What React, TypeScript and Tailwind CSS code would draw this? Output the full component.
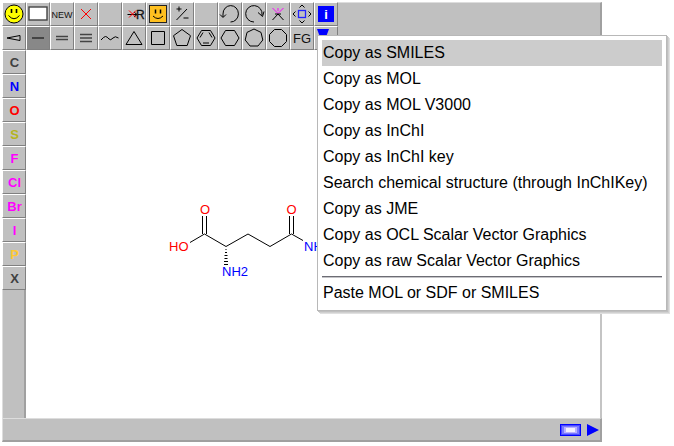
import type { ReactNode } from "react";

type Tool = { name: string; icon?: ReactNode; selected?: boolean };

const line = { fill: "none", stroke: "#000", strokeWidth: 1 };
const label = { fontFamily: '"Liberation Sans", Arial, sans-serif', fill: "#111" };

const topTools: Tool[] = [
  {
    name: "SMILES",
    icon: (
      <>
        <circle cx="12" cy="12" r="9" fill="#ff0" stroke="#000" />
        <path d="M9.5 7v4M14.5 7v4" stroke="#000" strokeWidth="1.6" />
        <path d="M6.5 13.5Q12 20 17.5 13.5" {...line} />
      </>
    ),
  },
  { name: "Clear", icon: <rect x="3" y="5" width="18" height="13" fill="#fff" stroke="#444" strokeWidth="1.4" /> },
  { name: "New", icon: <text x="12" y="16" fontSize="9" textAnchor="middle" {...label}>NEW</text> },
  { name: "Delete", icon: <path d="M7 7l10 10M17 7L7 17" stroke="#f00" /> },
  { name: "Unused" },
  {
    name: "Delete R",
    icon: (
      <>
        <path d="M5.500 12.500h9M12 10l3 2.500-3 2.500" {...line} />
        <path d="M7 8.500l7 7M14 8.500l-7 7" stroke="#f00" />
        <text x="14" y="17" fontSize="12" {...label} stroke="#111" strokeWidth="0.3">R</text>
      </>
    ),
  },
  {
    name: "Template",
    icon: (
      <>
        <rect x="3.500" y="3.500" width="17" height="17" fill="#ffc020" stroke="#222" />
        <path d="M9.500 7.500v4M14.500 7.500v4" stroke="#000" strokeWidth="1.5" />
        <path d="M7 14Q12 19 17 14" {...line} />
      </>
    ),
  },
  { name: "Charge", icon: <path d="M6.500 7h5M9 4.500v5M6.500 18L17 7M13.500 16h5" {...line} /> },
  { name: "Unused slot" },
  { name: "Undo", icon: <path d="M5 15V12A7.700 8.200 0 1 1 12.500 20M2 12.500l3 3 3-3" {...line} /> },
  { name: "Redo", icon: <path d="M12 20A8.200 8.200 0 1 1 20 13M16 10.500l4.500 4 1.500-5" {...line} /> },
  {
    name: "Spin",
    icon: (
      <>
        <path d="M6.500 6L12 11.500 17.500 6M12 6v3" fill="none" stroke="#f0f" />
        <path d="M6.500 18L12 12l5.500 6M9 12h6" {...line} />
      </>
    ),
  },
  {
    name: "Move",
    icon: (
      <>
        <rect x="8.500" y="8.500" width="7" height="7" fill="none" stroke="#22f" strokeWidth="1.3" />
        <path d="M9.500 5.500l2.500-2.500 2.500 2.500M9.500 18.500l2.500 2.500 2.500-2.500M5.500 9.500l-2.500 2.500 2.500 2.500M18.500 9.500l2.500 2.500-2.500 2.500" {...line} />
      </>
    ),
  },
  {
    name: "Information",
    icon: (
      <>
        <rect x="4" y="4" width="16" height="16" fill="#00f" />
        <text x="12" y="17" fontSize="13" fontWeight="700" textAnchor="middle" {...label} fill="#fff">i</text>
      </>
    ),
  },
];

const bondTools: Tool[] = [
  { name: "Stereo bond", icon: <path d="M5 12l13-2.500v5z" {...line} /> },
  { name: "Single bond", selected: true, icon: <path d="M6 12h12" {...line} /> },
  { name: "Double bond", icon: <path d="M6 10.500h12M6 13.500h12" stroke="#444" strokeWidth="1.4" /> },
  { name: "Triple bond", icon: <path d="M6 8.500h12M6 12h12M6 15.500h12" stroke="#444" strokeWidth="1.4" /> },
  { name: "Chain", icon: <path d="M3 14Q6 10.500 7.500 10.500Q9 10.500 11 13Q12.500 15 15 12Q17 9.500 20.500 12" {...line} /> },
  { name: "Three ring", icon: <path d="M12 5.500L20 18.500H4z" {...line} /> },
  { name: "Four ring", icon: <path d="M5.500 5.500h13v13h-13z" {...line} /> },
  { name: "Five ring", icon: <path d="M12 3.500l8.500 6.200-3.300 9.800H6.800L3.500 9.700z" {...line} /> },
  {
    name: "Benzene",
    icon: <path d="M3 12l4.500-7.500h9L21 12l-4.500 7.500h-9zM6 11.500l3-5M15 6.500l3 5M9 17h6" {...line} />,
  },
  { name: "Six ring", icon: <path d="M3 12l4.500-7.500h9L21 12l-4.500 7.500h-9z" {...line} /> },
  { name: "Seven ring", icon: <path d="M12 3l7 3.400 1.800 7.600L16 20H8l-4.800-6L5 6.400z" {...line} /> },
  { name: "Eight ring", icon: <path d="M8.500 3.500h7l5 5v7l-5 5h-7l-5-5v-7z" {...line} /> },
  { name: "Functional groups", icon: <text x="12" y="17" fontSize="13" textAnchor="middle" {...label}>FG</text> },
  { name: "Copy and paste menu", icon: <path d="M3 3h12L9 19z" fill="#00f" /> },
];

const atoms = [
  { symbol: "C", color: "text-[#404040]" },
  { symbol: "N", color: "text-[#0000ff]" },
  { symbol: "O", color: "text-[#ff0000]" },
  { symbol: "S", color: "text-[#b4b41e]" },
  { symbol: "F", color: "text-[#ff00ff]" },
  { symbol: "Cl", color: "text-[#ff00ff]" },
  { symbol: "Br", color: "text-[#ff00ff]" },
  { symbol: "I", color: "text-[#ff00ff]" },
  { symbol: "P", color: "text-[#ffc832]" },
  { symbol: "X", color: "text-[#404040]" },
];

const copyItems = [
  "Copy as SMILES",
  "Copy as MOL",
  "Copy as MOL V3000",
  "Copy as InChI",
  "Copy as InChI key",
  "Search chemical structure (through InChIKey)",
  "Copy as JME",
  "Copy as OCL Scalar Vector Graphics",
  "Copy as raw Scalar Vector Graphics",
];

const cell = "block size-6 shrink-0 border border-t-white border-l-white border-r-[#808080] border-b-[#808080]";

function ToolRow({ tools }: { tools: Tool[] }) {
  return (
    <div className="flex">
      {tools.map((tool) => (
        <button
          key={tool.name}
          type="button"
          aria-label={tool.name}
          className={`${cell} ${tool.selected ? "bg-[#888888]" : "bg-[#c0c0c0]"}`}
        >
          <svg viewBox="1 1 22 22" className="block size-full" aria-hidden="true">
            {tool.icon}
          </svg>
        </button>
      ))}
    </div>
  );
}

function Molecule() {
  return (
    <svg className="block size-full" role="img" aria-label="Molecule" fontFamily='"Liberation Sans", Arial, sans-serif' fontSize="13">
      <g transform="translate(-26 -50)">
        <path
          d="M190 242.500L204.500 234 226 246.500 248 234 270 246.500 291.500 234 303 240.500M202.500 234v-18M206.500 234v-18M289.500 234v-18M293.500 234v-18"
          {...line}
        />
        <path d="M225.500 249.500h1M225 252.500h2M224.500 255.500h3M224.500 258.500h3M224 261.500h4M224 264.500h4" {...line} />
        <g fill="#f00">
          <text x="205" y="214" textAnchor="middle">O</text>
          <text x="291.500" y="214" textAnchor="middle">O</text>
          <text x="169" y="251">HO</text>
        </g>
        <g fill="#00f">
          <text x="222" y="276">NH2</text>
          <text x="304" y="251">NH2</text>
        </g>
      </g>
    </svg>
  );
}

function MenuItem({ children, active }: { children: string; active?: boolean }) {
  return (
    <button
      type="button"
      role="menuitem"
      className={`block h-[26px] w-full pl-px text-left text-base whitespace-nowrap text-black ${active ? "bg-[#cccccc]" : ""}`}
    >
      {children}
    </button>
  );
}

export default function App() {
  return (
    <main className="p-0.5 font-['Liberation_Sans',Arial,sans-serif]">
      <div className="relative w-full max-w-[600px]">
        <div className="border-t border-r-2 border-t-[#dddddd] border-r-[#a0a0a0] bg-[#c0c0c0]">
          <div className="-mt-px">
            <ToolRow tools={topTools} />
            <ToolRow tools={bondTools} />
          </div>
        </div>

        <div className="flex h-[368px]">
          <div className="flex w-6 shrink-0 flex-col bg-[#c0c0c0]">
            {atoms.map((atom) => (
              <button key={atom.symbol} type="button" className={`${cell} pl-px text-center text-[13px] leading-6 font-bold ${atom.color}`}>
                {atom.symbol}
              </button>
            ))}
            <div className="flex-1 border-r-2 border-l border-r-[#a0a0a0] border-l-[#dddddd]" />
          </div>
          <div className="min-w-0 flex-1 border-r-2 border-r-[#c4c4c4] bg-white">
            <Molecule />
          </div>
        </div>

        <div className="flex h-6 items-center justify-end gap-1.5 border-t border-r-2 border-b-2 border-l border-t-[#dddddd] border-r-[#a0a0a0] border-b-[#a0a0a0] border-l-[#dddddd] bg-[#c0c0c0] pr-px">
          <button type="button" aria-label="Zoom" className="block h-3 w-[21px]">
            <svg viewBox="0 0 21 12" className="block size-full" aria-hidden="true">
              <rect width="21" height="12" fill="#00f" />
              <rect x="1" y="1" width="19" height="10" fill="#4848ff" />
              <rect x="2" y="2" width="17" height="8" fill="#7878ff" />
              <rect x="4" y="3" width="13" height="6" fill="#b8b0ff" />
              <rect x="6" y="4" width="9" height="4" fill="#f4f0ff" />
            </svg>
          </button>
          <button type="button" aria-label="Next" className="block size-3">
            <svg viewBox="0 0 12 12" className="block size-full" aria-hidden="true">
              <path d="M0 0l12 6-12 6z" fill="#00f" />
            </svg>
          </button>
        </div>

        <div
          role="menu"
          aria-label="Copy and paste"
          className="absolute top-[33px] left-[315px] w-[350px] border border-[#b8b8b8] bg-white p-1 shadow-[1px_1px_0_#c0c0c0,2px_2px_0_#d0d0d0,3px_3px_0_#e0e0e0]"
        >
          {copyItems.map((item, index) => (
            <MenuItem key={item} active={index === 0}>
              {item}
            </MenuItem>
          ))}
          <hr className="my-0.5 h-0.5 border-t border-b border-t-[#6c6c74] border-b-[#c4c4c8]" />
          <MenuItem>Paste MOL or SDF or SMILES</MenuItem>
        </div>
      </div>
    </main>
  );
}
